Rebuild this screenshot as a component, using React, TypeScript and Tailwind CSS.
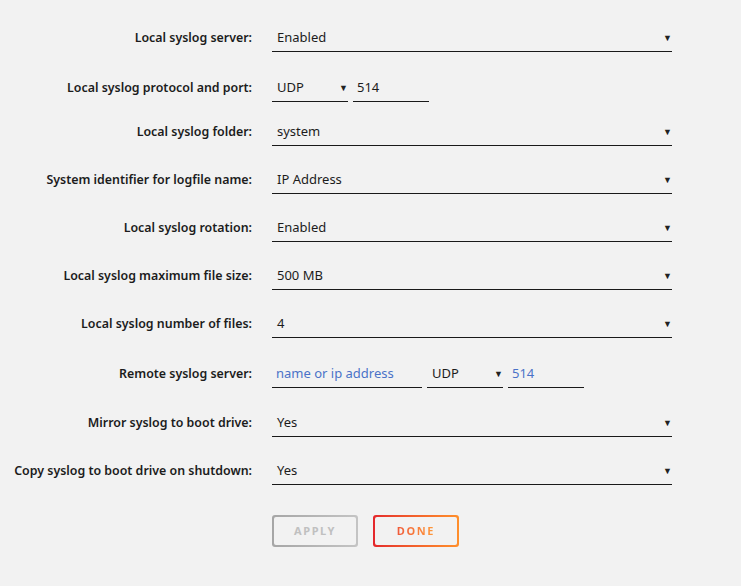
import React from "react";

const font = { fontFamily: '"Noto Sans", "Open Sans", Arial, sans-serif' };

const Arrow = () => <span className="text-[9px] leading-none text-[#222] ml-auto">▼</span>;

const Select = ({ value, className = "" }: { value: string; className?: string }) => (
  <div className={`flex items-center h-[30px] border-b border-[#1a1a1a] pl-[5px] pt-[2px] text-[13px] text-[#1c1c1c] ${className}`}>
    <span>{value}</span>
    <Arrow />
  </div>
);

const Input = ({ value, blue = false, className = "" }: { value: string; blue?: boolean; className?: string }) => (
  <div
    className={`flex items-center h-[30px] border-b border-[#1a1a1a] pl-[4px] pt-[2px] text-[13px] ${blue ? "text-[#4a72c8]" : "text-[#1c1c1c]"} ${className}`}
  >
    {value}
  </div>
);

const Row = ({ label, children, className = "" }: { label: string; children: React.ReactNode; className?: string }) => (
  <div className={`flex items-center ${className}`}>
    <div className="w-[252px] text-right text-[12.4px] font-semibold text-[#1c1c1c] pt-[2px]">{label}</div>
    <div className="ml-[20px] w-[400px] flex gap-[5px]">{children}</div>
  </div>
);

export default function App() {
  return (
    <div className="w-[741px] h-[586px] bg-[#f2f2f2] pt-[22px]" style={font}>
      <div className="flex flex-col gap-[18px]">
        <Row label="Local syslog server:">
          <Select value="Enabled" className="w-full" />
        </Row>
        <Row label="Local syslog protocol and port:" className="mt-[2px]">
          <Select value="UDP" className="w-[76px]" />
          <Input value="514" className="w-[76px]" />
        </Row>
        <Row label="Local syslog folder:" className="-mt-[4px]">
          <Select value="system" className="w-full" />
        </Row>
        <Row label="System identifier for logfile name:">
          <Select value="IP Address" className="w-full" />
        </Row>
        <Row label="Local syslog rotation:">
          <Select value="Enabled" className="w-full" />
        </Row>
        <Row label="Local syslog maximum file size:">
          <Select value="500 MB" className="w-full" />
        </Row>
        <Row label="Local syslog number of files:">
          <Select value="4" className="w-full" />
        </Row>
        <Row label="Remote syslog server:" className="mt-[2px]">
          <Input value="name or ip address" blue className="w-[150px]" />
          <Select value="UDP" className="w-[76px]" />
          <Input value="514" blue className="w-[76px]" />
        </Row>
        <Row label="Mirror syslog to boot drive:" className="mt-[1px]">
          <Select value="Yes" className="w-full" />
        </Row>
        <Row label="Copy syslog to boot drive on shutdown:">
          <Select value="Yes" className="w-full" />
        </Row>
      </div>
      <div className="flex gap-[15px] ml-[272px] mt-[30px]">
        <button className="w-[86px] h-[32px] rounded-[3px] p-[2px] bg-gradient-to-r from-[#a6a6a6] to-[#c4c4c4]">
          <span className="flex items-center justify-center w-full h-full rounded-[2px] bg-[#f2f2f2] text-[11px] font-bold tracking-[1.6px] text-[#c0c0c0]">
            APPLY
          </span>
        </button>
        <button className="w-[86px] h-[32px] rounded-[3px] p-[2px] bg-gradient-to-r from-[#e4262c] to-[#ff8f2b]">
          <span className="flex items-center justify-center w-full h-full rounded-[2px] bg-[#f2f2f2] text-[11px] font-bold tracking-[1.6px]">
            <span className="bg-gradient-to-r from-[#f05a3a] to-[#ff9a3a] bg-clip-text text-transparent">DONE</span>
          </span>
        </button>
      </div>
    </div>
  );
}
